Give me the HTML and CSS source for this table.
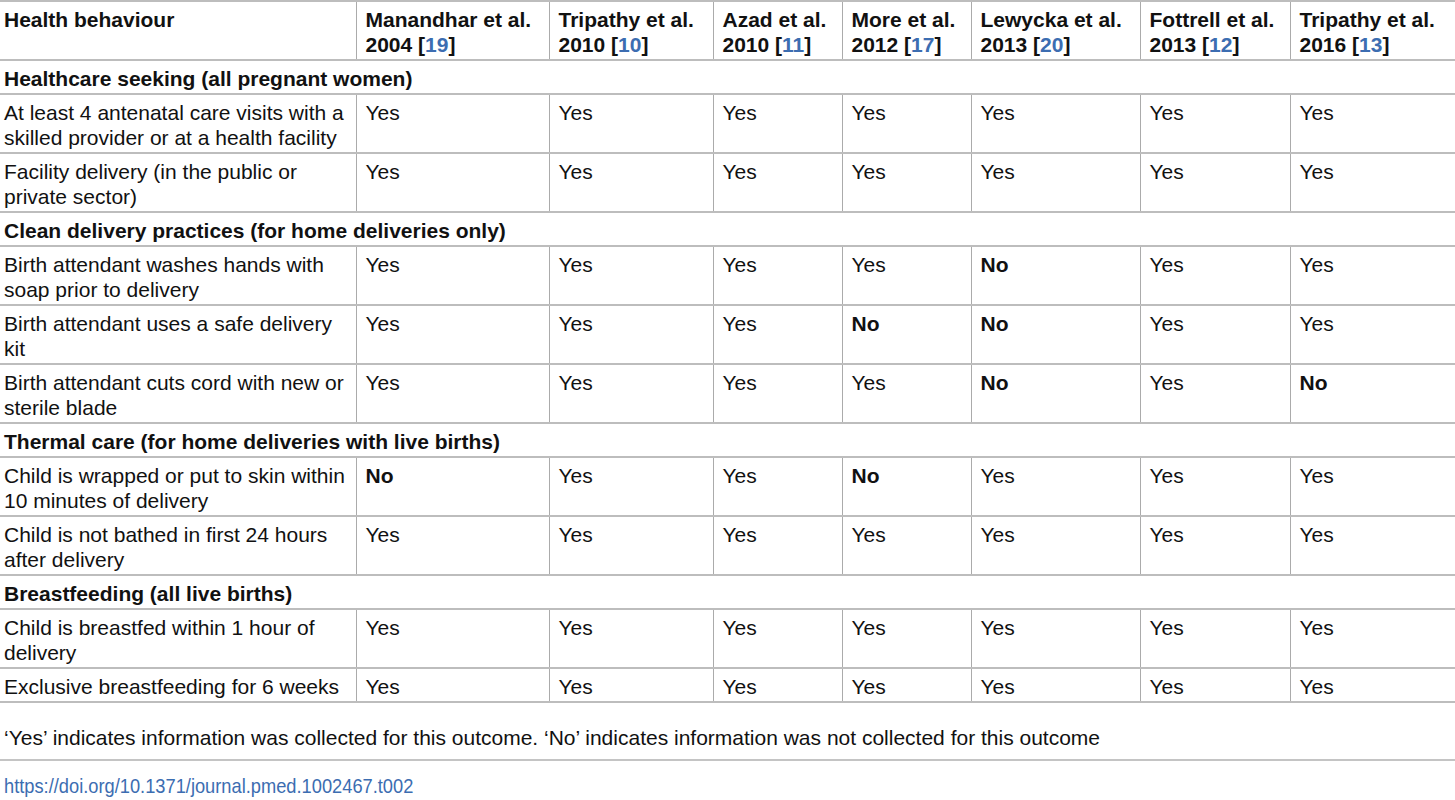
FILE: index.html
```html
<!DOCTYPE html>
<html lang="en">
<head>
<meta charset="utf-8">
<title>Table 2</title>
<link rel="stylesheet" href="styles.css">
</head>
<body>
<div class="page">
<table class="data">
<colgroup>
<col class="c1"><col class="c2"><col class="c3"><col class="c4"><col class="c5"><col class="c6"><col class="c7"><col class="c8">
</colgroup>
<thead>
<tr>
<th>Health behaviour</th>
<th>Manandhar et al. 2004 [<a class="ref">19</a>]</th>
<th>Tripathy et al. 2010 [<a class="ref">10</a>]</th>
<th>Azad et al. 2010 [<a class="ref">11</a>]</th>
<th>More et al. 2012 [<a class="ref">17</a>]</th>
<th>Lewycka et al. 2013 [<a class="ref">20</a>]</th>
<th>Fottrell et al. 2013 [<a class="ref">12</a>]</th>
<th>Tripathy et al. 2016 [<a class="ref">13</a>]</th>
</tr>
</thead>
<tbody>
<tr class="section"><td colspan="8">Healthcare seeking (all pregnant women)</td></tr>
<tr><td>At least 4 antenatal care visits with a skilled provider or at a health facility</td><td>Yes</td><td>Yes</td><td>Yes</td><td>Yes</td><td>Yes</td><td>Yes</td><td>Yes</td></tr>
<tr><td>Facility delivery (in the public or private sector)</td><td>Yes</td><td>Yes</td><td>Yes</td><td>Yes</td><td>Yes</td><td>Yes</td><td>Yes</td></tr>
<tr class="section"><td colspan="8">Clean delivery practices (for home deliveries only)</td></tr>
<tr><td>Birth attendant washes hands with soap prior to delivery</td><td>Yes</td><td>Yes</td><td>Yes</td><td>Yes</td><td class="no">No</td><td>Yes</td><td>Yes</td></tr>
<tr><td>Birth attendant uses a safe delivery kit</td><td>Yes</td><td>Yes</td><td>Yes</td><td class="no">No</td><td class="no">No</td><td>Yes</td><td>Yes</td></tr>
<tr><td>Birth attendant cuts cord with new or sterile blade</td><td>Yes</td><td>Yes</td><td>Yes</td><td>Yes</td><td class="no">No</td><td>Yes</td><td class="no">No</td></tr>
<tr class="section"><td colspan="8">Thermal care (for home deliveries with live births)</td></tr>
<tr><td>Child is wrapped or put to skin within 10 minutes of delivery</td><td class="no">No</td><td>Yes</td><td>Yes</td><td class="no">No</td><td>Yes</td><td>Yes</td><td>Yes</td></tr>
<tr><td>Child is not bathed in first 24 hours after delivery</td><td>Yes</td><td>Yes</td><td>Yes</td><td>Yes</td><td>Yes</td><td>Yes</td><td>Yes</td></tr>
<tr class="section"><td colspan="8">Breastfeeding (all live births)</td></tr>
<tr><td>Child is breastfed within 1 hour of delivery</td><td>Yes</td><td>Yes</td><td>Yes</td><td>Yes</td><td>Yes</td><td>Yes</td><td>Yes</td></tr>
<tr><td>Exclusive breastfeeding for 6 weeks</td><td>Yes</td><td>Yes</td><td>Yes</td><td>Yes</td><td>Yes</td><td>Yes</td><td>Yes</td></tr>
</tbody>
</table>
<p class="note">‘Yes’ indicates information was collected for this outcome. ‘No’ indicates information was not collected for this outcome</p>
<div class="doi"><a class="doi-link">https://doi.org/10.1371/journal.pmed.1002467.t002</a></div>
</div>
</body>
</html>
```

FILE: styles.css
```css
html, body {
  margin: 0;
  padding: 0;
  background: #fff;
}

body {
  font-family: "Liberation Sans", Arial, sans-serif;
  font-size: 21px;
  color: #111;
}

.page {
  width: 1455px;
}

.data {
  width: 100%;
  border-collapse: collapse;
  table-layout: fixed;
  border-top: 2px solid #bdbdbd;
}

.c1 { width: 356px; }
.c2 { width: 193px; }
.c3 { width: 164px; }
.c4 { width: 129px; }
.c5 { width: 129px; }
.c6 { width: 169px; }
.c7 { width: 150px; }
.c8 { width: 165px; }

.data th,
.data td {
  text-align: left;
  vertical-align: top;
  line-height: 25px;
  padding: 5px 6px 2px 9px;
  border-bottom: 2px solid #bdbdbd;
  border-left: 1px solid #ababab;
}

.data th {
  font-weight: bold;
}

.data th:first-child,
.data td:first-child {
  border-left: none;
  padding-left: 4px;
}

.data .section td {
  font-weight: bold;
  padding-left: 4px;
}

.data td.no {
  font-weight: bold;
}

.ref {
  color: #3c6db1;
  text-decoration: none;
}

.note {
  margin: 0;
  padding: 22px 0 9px 4px;
  line-height: 25px;
  border-bottom: 2px solid #c4c4c4;
}

.doi {
  padding: 12px 0 0 4px;
  line-height: 25px;
}

.doi-link {
  display: inline-block;
  color: #3c6db1;
  text-decoration: none;
  transform: scaleX(0.87);
  transform-origin: left center;
}
```
